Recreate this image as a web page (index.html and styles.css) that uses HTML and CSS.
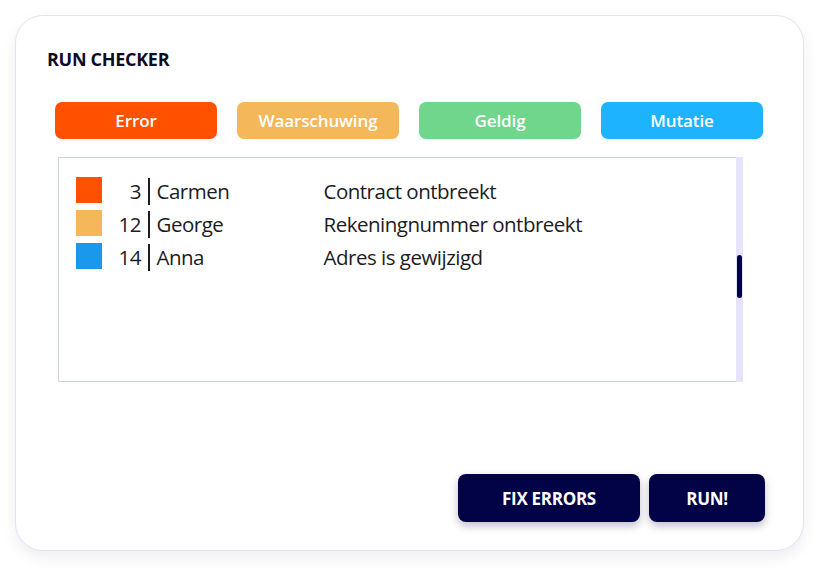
FILE: index.html
```html
<!DOCTYPE html>
<html>
<head>
<meta charset="utf-8">
<link rel="stylesheet" href="styles.css">
</head>
<body>
<div class="card">
  <h1 class="title">RUN CHECKER</h1>
  <div class="filters">
    <div class="chip chip-error">Error</div>
    <div class="chip chip-warn">Waarschuwing</div>
    <div class="chip chip-valid">Geldig</div>
    <div class="chip chip-mut">Mutatie</div>
  </div>
  <div class="list">
    <div class="rows">
      <div class="row">
        <span class="sq sq-error"></span>
        <span class="num">3</span>
        <span class="sep"></span>
        <span class="name">Carmen</span>
        <span class="desc">Contract ontbreekt</span>
      </div>
      <div class="row">
        <span class="sq sq-warn"></span>
        <span class="num">12</span>
        <span class="sep"></span>
        <span class="name">George</span>
        <span class="desc">Rekeningnummer ontbreekt</span>
      </div>
      <div class="row">
        <span class="sq sq-mut"></span>
        <span class="num">14</span>
        <span class="sep"></span>
        <span class="name">Anna</span>
        <span class="desc">Adres is gewijzigd</span>
      </div>
    </div>
    <div class="track"><div class="thumb"></div></div>
  </div>
  <div class="actions">
    <button class="btn btn-fix">FIX ERRORS</button>
    <button class="btn btn-run">RUN!</button>
  </div>
</div>
</body>
</html>
```
FILE: styles.css
```css
* { box-sizing: border-box; }
html, body { margin: 0; padding: 0; background: #ffffff; }
body {
  width: 829px;
  height: 576px;
  padding: 15px 0 0 15px;
  font-family: "Open Sans", "Noto Sans", sans-serif;
  color: #1a1a24;
}
.card {
  width: 789px;
  height: 536px;
  border: 1px solid #e4e1f7;
  border-radius: 28px;
  background: #fff;
  box-shadow: 0 6px 14px rgba(40, 40, 80, 0.08);
  padding: 36px 38px 0 39px;
  display: flex;
  flex-direction: column;
}
.title {
  margin: 0 0 0 -8px;
  font-size: 18px;
  font-weight: 700;
  line-height: 14px;
  height: 14px;
  color: #0b0b26;
  letter-spacing: -0.3px;
}
.filters {
  margin-top: 36px;
  display: flex;
  gap: 20px;
}
.chip {
  width: 162px;
  height: 37px;
  border-radius: 7px;
  color: #fff;
  font-size: 17px;
  font-weight: 600;
  display: flex;
  align-items: center;
  justify-content: center;
  letter-spacing: -0.1px;
}
.chip-error { background: #ff5100; }
.chip-warn { background: #f4b75a; }
.chip-valid { background: #6fd68c; }
.chip-mut { background: #1eb3ff; }
.list {
  margin: 18px 22px 0 3px;
  height: 225px;
  border: 1px solid #cad6e2;
  display: flex;
}
.rows {
  flex: 1;
  padding: 19px 0 0 17px;
  display: flex;
  flex-direction: column;
  gap: 7px;
}
.row {
  display: flex;
  align-items: center;
  height: 26px;
  font-size: 20.5px;
  color: #1c1c22;
  letter-spacing: -0.5px;
}
.row > span:not(.sq):not(.sep) { position: relative; top: 1px; }
.sq { width: 26px; height: 26px; display: block; }
.sq-error { background: #ff5100; }
.sq-warn { background: #f4b75a; }
.sq-mut { background: #1a98ec; }
.num { width: 39px; text-align: right; }
.sep {
  width: 1.5px;
  height: 27px;
  background: #1c1c22;
  margin: 2px 7px 0 7px;
}
.name { width: 167px; }
.track {
  width: 7px;
  margin-right: -1px;
  margin-top: -1px;
  margin-bottom: -1px;
  background: #e6e4fb;
  position: relative;
}
.thumb {
  position: absolute;
  left: 1px;
  top: 98px;
  width: 5px;
  height: 43px;
  border-radius: 3px;
  background: #02024a;
}
.actions {
  margin-top: 92px;
  display: flex;
  justify-content: flex-end;
  gap: 9px;
}
.btn {
  height: 48px;
  border: none;
  border-radius: 8px;
  background: #020247;
  color: #fff;
  font-family: inherit;
  font-size: 17px;
  font-weight: 700;
  letter-spacing: -0.3px;
  box-shadow: 0 4px 8px rgba(0, 0, 40, 0.25);
  padding: 0;
}
.btn-fix { width: 182px; }
.btn-run { width: 116px; }
```
